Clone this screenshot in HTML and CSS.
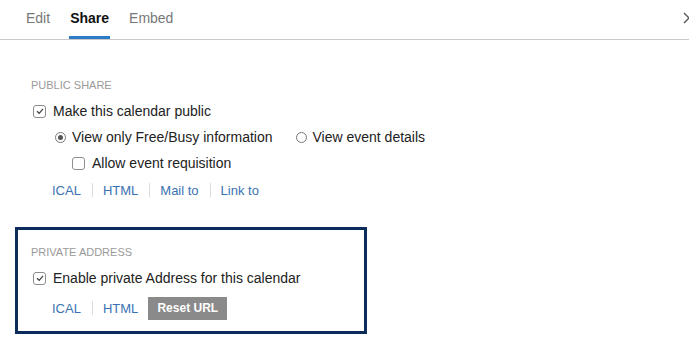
FILE: index.html
```html
<!DOCTYPE html>
<html>
<head>
<meta charset="utf-8">
<link rel="stylesheet" href="styles.css">
</head>
<body>
<div class="tabbar">
  <div class="tabs">
    <span class="tab">Edit</span>
    <span class="tab active">Share</span>
    <span class="tab">Embed</span>
  </div>
  <span class="close">
    <svg width="8" height="12" viewBox="0 0 8 12"><path d="M1 1 L6 6 L1 11" fill="none" stroke="#555" stroke-width="1.4"/></svg>
  </span>
</div>

<div class="content">
  <div class="section-label">PUBLIC SHARE</div>
  <div class="row">
    <span class="cb checked"><svg width="10" height="10" viewBox="0 0 10 10"><path d="M2 5.2 L4.2 7.3 L8 2.8" fill="none" stroke="#444" stroke-width="1.3"/></svg></span>
    <span>Make this calendar public</span>
  </div>
  <div class="row indent1">
    <span class="radio on"></span><span>View only Free/Busy information</span>
    <span class="radio second"></span><span>View event details</span>
  </div>
  <div class="row indent2">
    <span class="cb"></span><span>Allow event requisition</span>
  </div>
  <div class="links">
    <a class="link">ICAL</a><span class="sep"></span>
    <a class="link">HTML</a><span class="sep"></span>
    <a class="link">Mail to</a><span class="sep"></span>
    <a class="link">Link to</a>
  </div>

  <div class="private">
    <div class="section-label">PRIVATE ADDRESS</div>
    <div class="row">
      <span class="cb checked"><svg width="10" height="10" viewBox="0 0 10 10"><path d="M2 5.2 L4.2 7.3 L8 2.8" fill="none" stroke="#444" stroke-width="1.3"/></svg></span>
      <span>Enable private Address for this calendar</span>
    </div>
    <div class="links tight">
      <a class="link">ICAL</a><span class="sep"></span>
      <a class="link">HTML</a>
      <span class="btn">Reset URL</span>
    </div>
  </div>
</div>
</body>
</html>
```

FILE: styles.css
```css
* { box-sizing: border-box; }
html, body { margin: 0; padding: 0; background: #fff; }
body {
  font-family: "Liberation Sans", Arial, sans-serif;
  font-size: 14px;
  color: #222;
  width: 689px;
  height: 346px;
  overflow: hidden;
}
.tabbar {
  height: 40px;
  border-bottom: 1px solid #c9c9c9;
  display: flex;
  justify-content: space-between;
  align-items: flex-start;
}
.tabs {
  display: flex;
  gap: 20px;
  margin-left: 26px;
}
.tab {
  display: block;
  height: 39px;
  line-height: 36px;
  color: #777;
  font-size: 14px;
  border-bottom: 3px solid transparent;
}
.tab.active {
  color: #111;
  font-weight: bold;
  border-bottom-color: #2b7bc6;
  padding: 0 1px;
  margin: 0 -1px;
}
.close {
  display: flex;
  align-items: center;
  height: 36px;
  margin-right: -2px;
}
.content {
  padding-top: 37px;
}
.section-label {
  font-size: 11px;
  line-height: 16px;
  color: #9a9a9a;
  margin-left: 31px;
}
.row {
  display: flex;
  align-items: center;
  height: 26px;
  margin-left: 33px;
}
.content > .section-label + .row { margin-top: 5px; }
.row.indent1 { margin-left: 55px; }
.row.indent2 { margin-left: 72px; }
.cb {
  width: 13px;
  height: 13px;
  border: 1px solid #8d8d8d;
  border-radius: 3px;
  margin-right: 7px;
  display: flex;
  align-items: center;
  justify-content: center;
  flex: none;
}
.radio {
  width: 11px;
  height: 11px;
  border: 1px solid #777;
  border-radius: 50%;
  margin-right: 6px;
  flex: none;
  position: relative;
}
.radio.on::after {
  content: "";
  position: absolute;
  left: 2px;
  top: 2px;
  width: 5px;
  height: 5px;
  border-radius: 50%;
  background: #555;
}
.radio.second { margin-left: 23px; }
.links {
  display: flex;
  align-items: center;
  height: 26px;
  margin-left: 52px;
  font-size: 13px;
  margin-top: 1px;
}
.link { color: #3a72b3; text-decoration: none; }
.sep {
  width: 1px;
  height: 14px;
  background: #dcdcdc;
  margin: 0 10px 0 11px;
}
.private {
  margin: 24px 0 0 15px;
  width: 352px;
  border: 3px solid #0c2d5c;
  padding: 14px 0 10px 0;
}
.private .section-label { margin-left: 13px; }
.private .row { margin-left: 15px; margin-top: 5px; }
.private .links { margin-left: 34px; margin-top: 4px; }
.btn {
  display: inline-block;
  height: 23px;
  line-height: 23px;
  width: 79px;
  text-align: center;
  background: #8a8a8a;
  color: #fff;
  font-weight: bold;
  font-size: 12px;
  margin-left: 10px;
}
```
